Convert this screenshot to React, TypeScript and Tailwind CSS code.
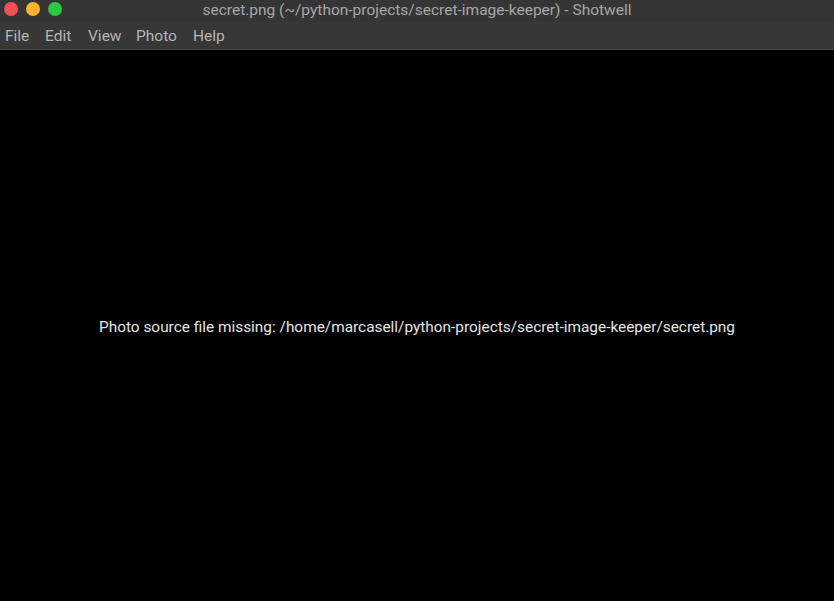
export default function App() {
  return (
    <div className="flex h-[601px] w-[834px] flex-col bg-black font-['Roboto',sans-serif]">
      {/* Title bar */}
      <div className="relative flex h-[22px] items-center justify-center bg-[#353535]">
        <div className="absolute left-[4px] top-[2px] flex gap-[8px]">
          <span className="h-[14px] w-[14px] rounded-full bg-[#f25056]" />
          <span className="h-[14px] w-[14px] rounded-full bg-[#fbb52a]" />
          <span className="h-[14px] w-[14px] rounded-full bg-[#2bc940]" />
        </div>
        <span className="text-[15.5px] text-[#a6a6a6]">
          secret.png (~/python-projects/secret-image-keeper) - Shotwell
        </span>
      </div>

      {/* Menu bar */}
      <div className="flex h-[28px] items-center border-b border-[#4a4a4a] bg-[#373737] px-[5px] pt-[3px]">
        <span className="w-[40px] text-[15.5px] text-[#b5b5b5]">File</span>
        <span className="w-[43px] text-[15.5px] text-[#b5b5b5]">Edit</span>
        <span className="w-[48px] text-[15.5px] text-[#b5b5b5]">View</span>
        <span className="w-[57px] text-[15.5px] text-[#b5b5b5]">Photo</span>
        <span className="text-[15.5px] text-[#b5b5b5]">Help</span>
      </div>

      {/* Viewer */}
      <div className="flex flex-1 items-center justify-center pt-[5px]">
        <span className="text-[15.4px] text-[#e6e6e6]">
          Photo source file missing: /home/marcasell/python-projects/secret-image-keeper/secret.png
        </span>
      </div>
    </div>
  );
}
